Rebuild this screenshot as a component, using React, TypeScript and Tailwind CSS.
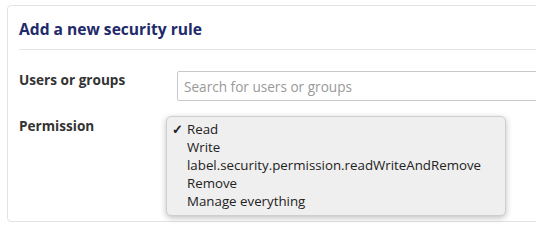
const options = [
  "Read",
  "Write",
  "label.security.permission.readWriteAndRemove",
  "Remove",
  "Manage everything",
];

export default function App() {
  return (
    <div className="h-[245px] w-[536px] overflow-hidden bg-white pl-[7px] pt-[5px] font-['Open_Sans',sans-serif]">
      <div className="relative -mr-4 h-[217px] rounded-tl-[4px] rounded-bl-[4px] border border-[#e3e3e3] pl-[11px]">
        <div className="border-b border-[#e5e5e5] pt-[10px] pb-[6px]">
          <h2 className="text-[15.6px] font-bold leading-[27px] text-[#1f2a6b]">Add a new security rule</h2>
        </div>
        <div className="mt-[21px] flex items-start">
          <label className="w-[158px] text-[13.6px] font-bold leading-[18px] text-[#333]">
            Users or groups
          </label>
          <input
            placeholder="Search for users or groups"
            className="h-[30px] flex-1 rounded-l-[2px] border border-[#c8c8c8] px-[6px] text-[13.6px] text-[#333] placeholder:text-[#999] outline-none"
          />
        </div>
        <div className="mt-[16px] flex items-start">
          <label className="text-[13.6px] font-bold leading-[18px] text-[#333]">Permission</label>
        </div>
        <div className="absolute left-[158px] top-[110px] w-[340px] rounded-[5px] border border-[#cfcfcf] bg-[#efefef] pt-[3px] pb-[5px] shadow-[0_2px_6px_rgba(0,0,0,0.25)]">
          {options.map((o, i) => (
            <div key={o} className="flex h-[18px] items-center text-[13.3px] leading-[18px] text-[#222]">
              <span className="w-[20px] pl-[5px] text-[13px] font-bold">{i === 0 ? "✓" : ""}</span>
              {o}
            </div>
          ))}
        </div>
      </div>
    </div>
  );
}
